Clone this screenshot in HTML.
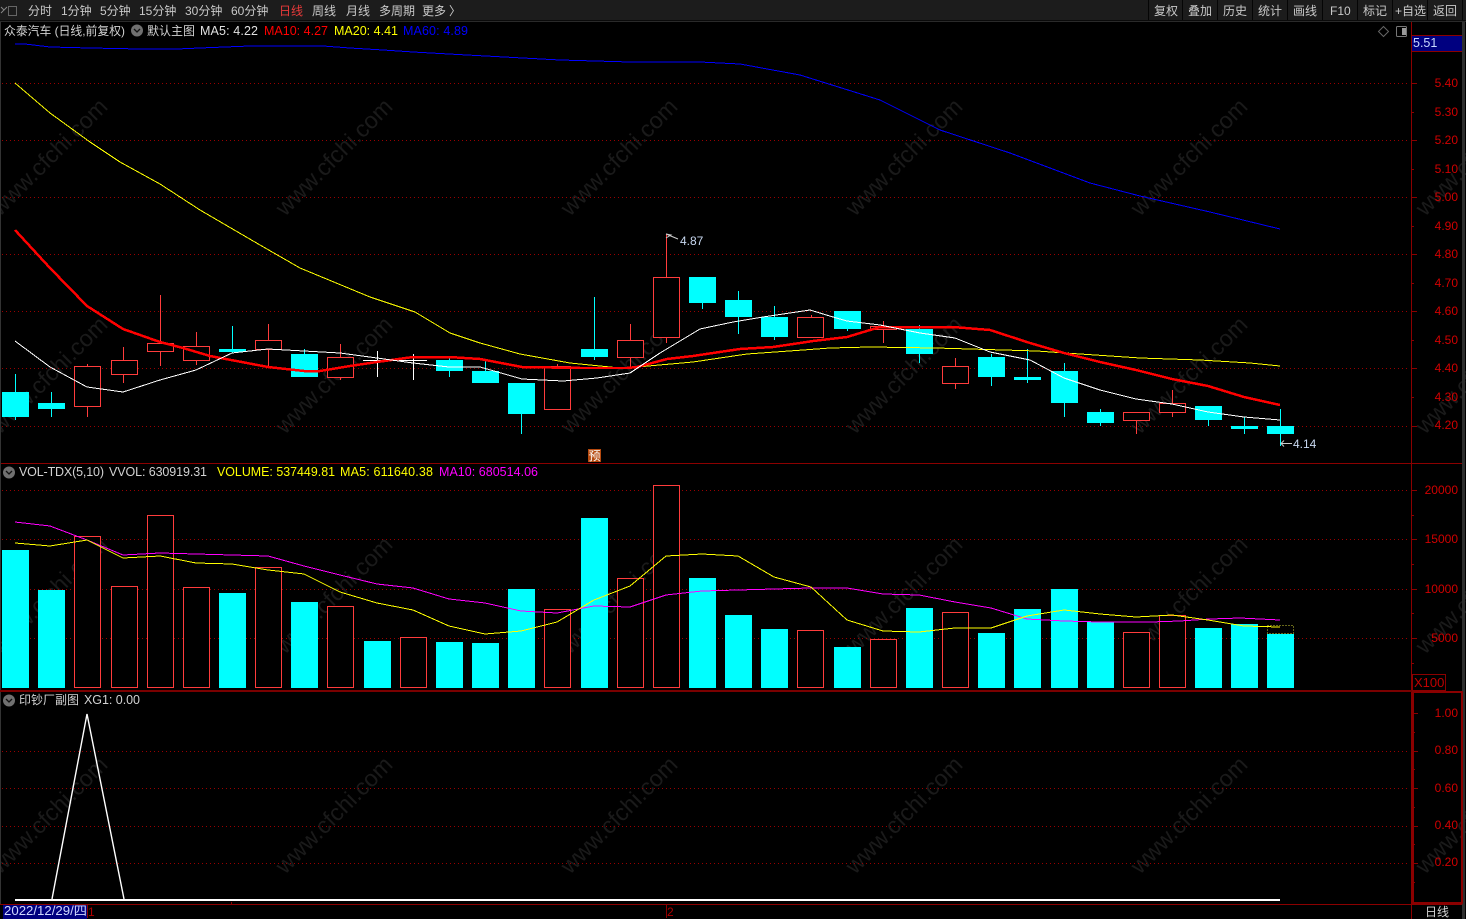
<!DOCTYPE html>
<html><head><meta charset="utf-8"><title>众泰汽车</title>
<style>
html,body{margin:0;padding:0;background:#000;width:1466px;height:919px;overflow:hidden}
svg{display:block;position:absolute;left:0;top:0}
text{font-family:"Liberation Sans","Noto Sans CJK SC",sans-serif;font-size:12px}
.wm{font-size:23.300px;fill:#1a1a1a}
.ax{fill:#d00000;text-anchor:end;font-size:13px}
.tb{fill:#c9c9c9}
.wr{stroke:#ff3c3c;fill:#000}
.wc{stroke:#0ff;fill:none}
.cy{fill:#0ff}
.g{stroke:#9a0000;stroke-dasharray:1 3;fill:none}
.l{fill:none;shape-rendering:crispEdges}
.d{stroke:#8b0000;fill:none}
</style></head><body>
<svg width="1466" height="919" viewBox="0 0 1466 919" xmlns="http://www.w3.org/2000/svg">
<rect width="1466" height="919" fill="#000"/>
<!-- watermarks -->
<g>
<text class="wm" transform="translate(0,217) rotate(-45)">www.cfchi.com</text>
<text class="wm" transform="translate(285,217) rotate(-45)">www.cfchi.com</text>
<text class="wm" transform="translate(570,217) rotate(-45)">www.cfchi.com</text>
<text class="wm" transform="translate(855,217) rotate(-45)">www.cfchi.com</text>
<text class="wm" transform="translate(1140,217) rotate(-45)">www.cfchi.com</text>
<text class="wm" transform="translate(1425,217) rotate(-45)">www.cfchi.com</text>
<text class="wm" transform="translate(0,435) rotate(-45)">www.cfchi.com</text>
<text class="wm" transform="translate(285,435) rotate(-45)">www.cfchi.com</text>
<text class="wm" transform="translate(570,435) rotate(-45)">www.cfchi.com</text>
<text class="wm" transform="translate(855,435) rotate(-45)">www.cfchi.com</text>
<text class="wm" transform="translate(1140,435) rotate(-45)">www.cfchi.com</text>
<text class="wm" transform="translate(1425,435) rotate(-45)">www.cfchi.com</text>
<text class="wm" transform="translate(0,655) rotate(-45)">www.cfchi.com</text>
<text class="wm" transform="translate(285,655) rotate(-45)">www.cfchi.com</text>
<text class="wm" transform="translate(570,655) rotate(-45)">www.cfchi.com</text>
<text class="wm" transform="translate(855,655) rotate(-45)">www.cfchi.com</text>
<text class="wm" transform="translate(1140,655) rotate(-45)">www.cfchi.com</text>
<text class="wm" transform="translate(1425,655) rotate(-45)">www.cfchi.com</text>
<text class="wm" transform="translate(0,875) rotate(-45)">www.cfchi.com</text>
<text class="wm" transform="translate(285,875) rotate(-45)">www.cfchi.com</text>
<text class="wm" transform="translate(570,875) rotate(-45)">www.cfchi.com</text>
<text class="wm" transform="translate(855,875) rotate(-45)">www.cfchi.com</text>
<text class="wm" transform="translate(1140,875) rotate(-45)">www.cfchi.com</text>
<text class="wm" transform="translate(1425,875) rotate(-45)">www.cfchi.com</text>
</g>
<!-- toolbar -->
<rect x="0" y="0" width="1466" height="20" fill="#1c1c1c"/>
<rect x="0" y="20" width="1466" height="2" fill="#0a0a0a"/>
<rect x="0" y="21" width="1466" height="1" fill="#2a2a2a"/>
<rect x="8.500" y="6.500" width="8" height="9" fill="none" stroke="#666"/>
<path d="M1 7l3 3-3 3M7 7l-3 3" fill="none" stroke="#888"/>
<g class="tb">
<text x="28" y="15">分时</text><text x="61" y="15">1分钟</text><text x="100" y="15">5分钟</text><text x="139" y="15">15分钟</text><text x="185" y="15">30分钟</text><text x="231" y="15">60分钟</text>
<text x="279" y="15" style="fill:#e83a3a">日线</text><text x="312" y="15">周线</text><text x="346" y="15">月线</text><text x="379" y="15">多周期</text><text x="422" y="15">更多</text><text x="449" y="15">〉</text>
<text x="1154" y="15">复权</text><text x="1188" y="15">叠加</text><text x="1223" y="15">历史</text><text x="1258" y="15">统计</text><text x="1293" y="15">画线</text><text x="1330" y="15">F10</text><text x="1363" y="15">标记</text><text x="1395" y="15">+自选</text><text x="1433" y="15">返回</text>
</g>
<path d="M1148.500 0V20M1182.500 0V20M1217.500 0V20M1252.500 0V20M1287.500 0V20M1322.500 0V20M1357.500 0V20M1392.500 0V20M1427.500 0V20M1462.500 0V20" stroke="#050505"/>
<!-- grid -->
<path class="g" d="M2 83.500H1408M2 140.500H1408M2 197.500H1408M2 254.500H1408M2 311.500H1408M2 368.500H1408M2 426.500H1408M2 490.500H1408M2 539.500H1408M2 589.500H1408M2 638.500H1408M2 751.500H1408M2 788.500H1408M2 826.500H1408M2 863.500H1408"/>
<!-- frame -->
<path class="d" d="M1411.500 22V919M0 463.500H1462M0 904.500H1462M1412 35.500H1462M1412 51.500H1462"/>
<rect x="0" y="22" width="1" height="882" fill="#333"/>
<rect x="1462" y="22" width="3" height="897" fill="#2e2e2e"/>
<rect x="1413" y="692" width="49" height="211" fill="none" stroke="#8b0000" stroke-width="2"/>
<rect x="0" y="690" width="1412" height="2" fill="#7a0000"/>
<!-- price ticks -->
<path class="d" d="M1411 83.500h6M1411 112.500h3M1411 140.500h6M1411 169.500h3M1411 197.500h6M1411 226.500h3M1411 254.500h6M1411 283.500h3M1411 311.500h6M1411 340.500h3M1411 368.500h6M1411 397.500h3M1411 426.500h6M1411 490.500h6M1411 515.500h3M1411 539.500h6M1411 564.500h3M1411 589.500h6M1411 613.500h3M1411 638.500h6M1411 663.500h3M1412 713.500h6M1412 732.500h3M1412 751.500h6M1412 769.500h3M1412 788.500h6M1412 807.500h3M1412 826.500h6M1412 844.500h3M1412 863.500h6M1412 882.500h3M231.500 904v-2M666.500 904v14M87.500 904v14"/>
<rect x="1412" y="36" width="50" height="15" fill="#000080"/>
<text x="1413" y="47" fill="#c8d8ff" style="font-size:12.500px">5.51</text>
<g class="ax">
<text x="1458" y="87">5.40</text><text x="1458" y="116">5.30</text><text x="1458" y="144">5.20</text><text x="1458" y="173">5.10</text><text x="1458" y="201">5.00</text><text x="1458" y="230">4.90</text><text x="1458" y="258">4.80</text><text x="1458" y="287">4.70</text><text x="1458" y="315">4.60</text><text x="1458" y="344">4.50</text><text x="1458" y="372">4.40</text><text x="1458" y="401">4.30</text><text x="1458" y="429">4.20</text>
<text x="1458" y="494">20000</text><text x="1458" y="543">15000</text><text x="1458" y="593">10000</text><text x="1458" y="642">5000</text>
<text x="1458" y="717">1.00</text><text x="1458" y="754">0.80</text><text x="1458" y="792">0.60</text><text x="1458" y="829">0.40</text><text x="1458" y="866">0.20</text>
</g>
<rect x="1412.500" y="674.500" width="33" height="16" fill="#000" stroke="#8b0000"/>
<text x="1414" y="687" fill="#c00000" style="font-size:13px">X100</text>
<!-- wicks main -->
<g shape-rendering="crispEdges">
<path class="wc" d="M15.500 374V420M51.500 392V417M232.500 326V353M304.500 349V377M449.500 358V377M485.500 360V383M521.500 383V434M594.500 297V360M702.500 277V309M738.500 291V334M774.500 306V340M847.500 311V331M919.500 325V363M991.500 354V386M1027.500 349V383M1064.500 363V417M1100.500 409V426M1208.500 406V426M1244.500 417V434M1280.500 409V446"/>
<path class="wr" d="M87.500 364V417M123.500 347V383M160.500 295V366M196.500 332V365M268.500 324V368M340.500 344V380M557.500 364V410M630.500 324V367M666.500 234V343M811.500 315V337M883.500 321V343M955.500 358V389M1136.500 412V434M1172.500 390V417"/>
<path d="M377.500 351V377M413.500 354V380" stroke="#fff" fill="none"/>
<path d="M363 360.500H390M399 360.500H427" stroke="#fff" fill="none"/>
<!-- bodies cyan -->
<g class="cy">
<rect x="2" y="392" width="27" height="25"/><rect x="38" y="403" width="27" height="6"/><rect x="219" y="349" width="27" height="3"/><rect x="291" y="354" width="27" height="23"/><rect x="436" y="360" width="27" height="11"/><rect x="472" y="371" width="27" height="12"/><rect x="508" y="383" width="27" height="31"/><rect x="581" y="349" width="27" height="8"/><rect x="689" y="277" width="27" height="26"/><rect x="725" y="300" width="27" height="17"/><rect x="761" y="317" width="27" height="20"/><rect x="834" y="311" width="27" height="18"/><rect x="906" y="329" width="27" height="25"/><rect x="978" y="357" width="27" height="20"/><rect x="1014" y="377" width="27" height="3"/><rect x="1051" y="371" width="27" height="32"/><rect x="1087" y="412" width="27" height="11"/><rect x="1195" y="406" width="27" height="14"/><rect x="1231" y="426" width="27" height="3"/><rect x="1267" y="426" width="27" height="8"/>
</g>
<!-- bodies red -->
<g class="wr">
<rect x="74.500" y="366.500" width="26" height="40"/><rect x="111.500" y="360.500" width="26" height="14"/><rect x="147.500" y="343.500" width="26" height="8"/><rect x="183.500" y="346.500" width="26" height="14"/><rect x="255.500" y="340.500" width="26" height="9"/><rect x="327.500" y="357.500" width="26" height="20"/><rect x="544.500" y="366.500" width="26" height="43"/><rect x="617.500" y="340.500" width="26" height="17"/><rect x="653.500" y="277.500" width="26" height="60"/><rect x="797.500" y="317.500" width="26" height="20"/><rect x="870.500" y="326.500" width="26" height="3"/><rect x="942.500" y="366.500" width="26" height="17"/><rect x="1123.500" y="412.500" width="26" height="8"/><rect x="1159.500" y="403.500" width="26" height="9"/>
</g>
</g>
<!-- MAs -->
<polyline class="l" stroke="#0000ff" points="15,44 25,44 50,47 90,48 140,49 177,49 200,48 250,46 323,46 350,48 383,50 413,52 467,55 560,60 630,62 700,62 740,64 800,75 880,100 940,130 1010,153 1090,183 1140,196 1210,212 1280,229"/>
<polyline class="l" stroke="#ffff00" points="15,83 50,113 90,142 120,162 160,184 200,210 260,245 300,268 370,297 415,312 450,333 480,343 520,354 570,363 620,368 637,367 693,362 747,354 803,350 830,348 870,347 936,348 1037,351 1065,353 1140,358 1200,360 1250,363 1280,366"/>
<polyline class="l" stroke="#ff0000" stroke-width="2.500" points="15,230 50,268 87,306 123,329 160,342 183,348 210,356 268,367 304,371 320,371 350,366 377,362 413,357 449,357 480,359 522,367 580,368 627,368 637,367 667,359 693,356 713,353 740,349 773,347 800,343 813,341 847,337 880,327 953,327 990,330 1030,343 1064,353 1100,362 1136,370 1172,379 1208,386 1244,397 1280,405"/>
<polyline class="l" stroke="#ffffff" points="15,341 50,367 87,387 123,392 160,380 196,370 232,353 268,349 304,351 340,353 377,358 413,363 449,367 480,367 522,379 563,381 597,378 630,373 660,353 700,329 733,322 763,317 810,310 833,317 847,321 880,325 920,333 955,338 990,352 1030,360 1064,378 1100,390 1136,399 1172,404 1208,412 1244,417 1280,420"/>
<!-- hi/lo labels -->
<path d="M666 238l5-3-5-1M666 234l12 5" stroke="#ccc" fill="none"/>
<text x="680" y="245" fill="#c8d8f0">4.87</text>
<path d="M1292 443.500h-11m3-3l-3 3 3 3" stroke="#ccc" fill="none"/>
<text x="1293" y="448" fill="#c8d8f0">4.14</text>
<rect x="588" y="449" width="13" height="13" fill="#b5490e"/>
<text x="588.500" y="460" fill="#fff">预</text>
<!-- header -->
<text x="4" y="35" fill="#d2d2d2" textLength="121" lengthAdjust="spacingAndGlyphs">众泰汽车 (日线,前复权)</text>
<circle cx="137" cy="30.500" r="6" fill="#707070"/><path d="M134 29l3 3 3-3" stroke="#111" fill="none" stroke-width="1.300"/>
<text x="147" y="35" fill="#d2d2d2">默认主图</text>
<text x="200" y="35" fill="#e0e0e0" style="font-size:12.500px" textLength="58">MA5: 4.22</text>
<text x="264" y="35" fill="#ff0000" style="font-size:12.500px" textLength="64">MA10: 4.27</text>
<text x="334" y="35" fill="#ffff00" style="font-size:12.500px" textLength="64">MA20: 4.41</text>
<text x="403" y="35" fill="#0000ff" style="font-size:12.500px" textLength="65">MA60: 4.89</text>
<path d="M1383.500 26.500l5 5-5 5-5-5z" stroke="#666" fill="none"/>
<rect x="1396.500" y="26.500" width="10" height="10" rx="1" fill="none" stroke="#777"/><rect x="1402" y="28" width="4" height="7" fill="#999"/>
<!-- volume pane header -->
<circle cx="9" cy="472.500" r="6" fill="#707070"/><path d="M6 471l3 3 3-3" stroke="#111" fill="none" stroke-width="1.300"/>
<text x="19" y="476" fill="#d2d2d2" style="font-size:12.500px" textLength="85">VOL-TDX(5,10)</text>
<text x="109" y="476" fill="#d2d2d2" style="font-size:12.500px" textLength="98">VVOL: 630919.31</text>
<text x="217" y="476" fill="#ffff00" style="font-size:12.500px" textLength="118" lengthAdjust="spacingAndGlyphs">VOLUME: 537449.81</text>
<text x="340" y="476" fill="#ffff00" style="font-size:12.500px" textLength="93">MA5: 611640.38</text>
<text x="439" y="476" fill="#ff00ff" style="font-size:12.500px" textLength="99">MA10: 680514.06</text>
<!-- volume bars -->
<g shape-rendering="crispEdges">
<g class="cy">
<rect x="2" y="550" width="27" height="138"/><rect x="38" y="590" width="27" height="98"/><rect x="219" y="593" width="27" height="95"/><rect x="291" y="602" width="27" height="86"/><rect x="364" y="641" width="27" height="47"/><rect x="436" y="642" width="27" height="46"/><rect x="472" y="643" width="27" height="45"/><rect x="508" y="589" width="27" height="99"/><rect x="581" y="518" width="27" height="170"/><rect x="689" y="578" width="27" height="110"/><rect x="725" y="615" width="27" height="73"/><rect x="761" y="629" width="27" height="59"/><rect x="834" y="647" width="27" height="41"/><rect x="906" y="608" width="27" height="80"/><rect x="978" y="633" width="27" height="55"/><rect x="1014" y="609" width="27" height="79"/><rect x="1051" y="589" width="27" height="99"/><rect x="1087" y="622" width="27" height="66"/><rect x="1195" y="628" width="27" height="60"/><rect x="1231" y="624" width="27" height="64"/><rect x="1267" y="634" width="27" height="54"/>
</g>
<g class="wr">
<rect x="74.500" y="536.500" width="26" height="151"/><rect x="111.500" y="586.500" width="26" height="101"/><rect x="147.500" y="515.500" width="26" height="172"/><rect x="183.500" y="587.500" width="26" height="100"/><rect x="255.500" y="567.500" width="26" height="120"/><rect x="327.500" y="606.500" width="26" height="81"/><rect x="400.500" y="637.500" width="26" height="50"/><rect x="544.500" y="609.500" width="26" height="78"/><rect x="617.500" y="578.500" width="26" height="109"/><rect x="653.500" y="485.500" width="26" height="202"/><rect x="797.500" y="630.500" width="26" height="57"/><rect x="870.500" y="639.500" width="26" height="48"/><rect x="942.500" y="612.500" width="26" height="75"/><rect x="1123.500" y="632.500" width="26" height="55"/><rect x="1159.500" y="615.500" width="26" height="72"/>
</g>
<rect x="1267.500" y="625.500" width="26" height="8" fill="none" stroke="#cccc33" stroke-dasharray="1 2"/>
</g>
<polyline class="l" stroke="#ff00ff" points="15,522 50,526 87,540 123,555 160,553 196,554 232,555 268,556 304,566 340,575 377,584 413,588 449,599 485,603 521,611 557,613 594,606 630,607 666,595 702,591 738,590 774,589 811,588 847,588 883,594 919,595 955,602 991,608 1027,619 1064,621 1100,622 1150,622 1180,621 1210,619 1240,618 1280,620"/>
<polyline class="l" stroke="#ffff00" points="15,543 50,546 87,540 123,558 160,556 196,563 232,564 268,570 304,574 340,592 377,603 413,610 449,626 485,634 521,631 557,622 594,600 630,586 666,556 702,554 738,556 774,577 811,587 847,620 883,631 919,632 955,628 991,628 1027,616 1064,610 1100,614 1136,617 1172,615 1208,620 1244,626 1280,627"/>
<!-- bottom pane -->
<circle cx="9" cy="700.500" r="6" fill="#707070"/><path d="M6 699l3 3 3-3" stroke="#111" fill="none" stroke-width="1.300"/>
<text x="19" y="704" fill="#d2d2d2">印钞厂副图</text>
<text x="84" y="704" fill="#d2d2d2" style="font-size:12.500px" textLength="56">XG1: 0.00</text>
<polyline points="52,899 87,714 124,899" fill="none" stroke="#fff" stroke-width="1.400"/>
<rect x="15" y="899" width="1265" height="2" fill="#fff"/>
<!-- date row -->
<rect x="3" y="905" width="84" height="14" fill="#000080"/>
<text x="4" y="915" fill="#d0d8ff" style="font-size:12.500px" textLength="83" lengthAdjust="spacingAndGlyphs">2022/12/29/四</text>
<text x="88" y="916" fill="#b00000">1</text>
<text x="667" y="916" fill="#b00000">2</text>
<text x="1425" y="916" fill="#d2d2d2">日线</text>
</svg>
</body></html>
